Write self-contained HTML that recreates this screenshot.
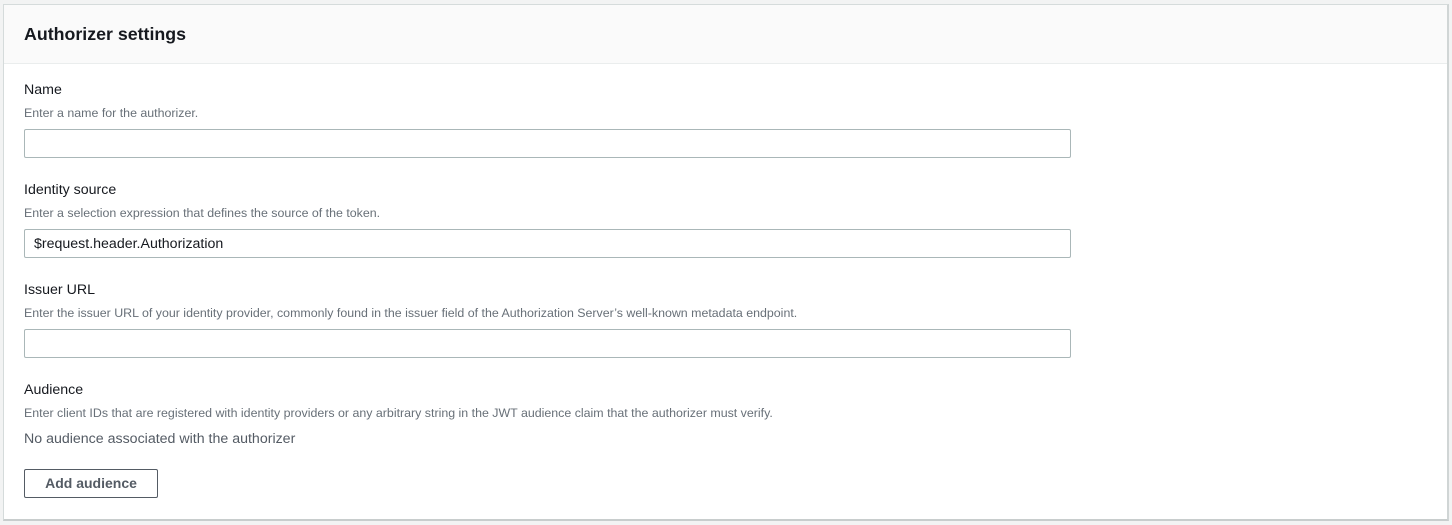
<!DOCTYPE html>
<html><head><style>
body{margin:0;background:#f2f3f3;font-family:"Liberation Sans",sans-serif;color:#16191f;width:1452px;height:525px;overflow:hidden;position:relative}
.card{position:absolute;left:3px;top:4px;width:1443px;height:514px;background:#fff;border:1px solid #d5dbdb;border-right:2px solid #d0d5d5;border-bottom:2px solid #c8cdcd}
.hd{height:58px;background:#fafafa;border-bottom:1px solid #eaeded;position:relative}
.hd span{position:absolute;left:20px;top:19px;font-size:17.8px;font-weight:bold;color:#16191f}
.a{position:absolute;left:20px;font-size:14.2px}
.lbl{color:#16191f}
.ds{font-size:12.4px;color:#687078}
.in{position:absolute;left:20px;width:1045px;height:27px;border:1px solid #aab7b8;border-radius:2px;background:#fff}
.in span{position:absolute;left:9px;top:6px;font-size:14.2px}
.btn{position:absolute;left:20px;top:464px;width:132px;height:27px;border:1px solid #545b64;border-radius:2px;font-weight:bold;font-size:14px;color:#545b64;text-align:center;line-height:27px}
</style></head><body>
<div class="card">
<div class="hd"><span>Authorizer settings</span></div>
<div class="a lbl" style="top:77px">Name</div>
<div class="a ds" style="top:101px">Enter a name for the authorizer.</div>
<div class="in" style="top:124px"></div>
<div class="a lbl" style="top:177px">Identity source</div>
<div class="a ds" style="top:201px">Enter a selection expression that defines the source of the token.</div>
<div class="in" style="top:224px"><span>$request.header.Authorization</span></div>
<div class="a lbl" style="top:277px">Issuer URL</div>
<div class="a ds" style="top:301px">Enter the issuer URL of your identity provider, commonly found in the issuer field of the Authorization Server’s well-known metadata endpoint.</div>
<div class="in" style="top:324px"></div>
<div class="a lbl" style="top:377px">Audience</div>
<div class="a ds" style="top:401px">Enter client IDs that are registered with identity providers or any arbitrary string in the JWT audience claim that the authorizer must verify.</div>
<div class="a" style="top:426px;color:#545b64">No audience associated with the authorizer</div>
<div class="btn">Add audience</div>
</div>
</body></html>
